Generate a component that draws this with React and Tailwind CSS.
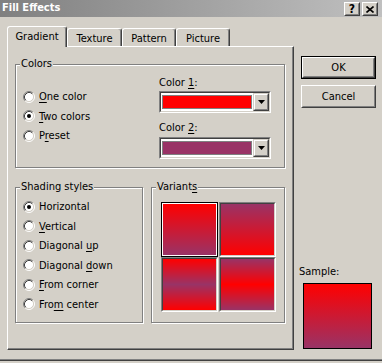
import React from "react";

// mnemonic underline
const U = ({ children }) => <span className="underline underline-offset-[2px]">{children}</span>;

function Radio({ checked }) {
  return (
    <svg width="12" height="12" viewBox="0 0 12 12" className="shrink-0">
      <circle cx="6" cy="6" r="4.5" fill="#fff" />
      <path d="M2.11 9.89 A5.5 5.5 0 0 1 9.89 2.11" fill="none" stroke="#808080" />
      <path d="M9.89 2.11 A5.5 5.5 0 0 1 2.11 9.89" fill="none" stroke="#fff" />
      <path d="M2.82 9.18 A4.5 4.5 0 0 1 9.18 2.82" fill="none" stroke="#404040" />
      <path d="M9.18 2.82 A4.5 4.5 0 0 1 2.82 9.18" fill="none" stroke="#d4d0c8" />
      {checked && <circle cx="6" cy="6" r="2" fill="#000" />}
    </svg>
  );
}

const RadioRow = ({ checked, children }) => (
  <div className="flex h-[19.5px] items-center gap-[4px]">
    <Radio checked={checked} />
    <span>{children}</span>
  </div>
);

function Group({ label, className, children }) {
  return (
    <div className={`relative border border-[#808080] shadow-[inset_1px_1px_0_#fff,1px_1px_0_#fff] ${className}`}>
      <span className="absolute left-[4px] top-[-8px] bg-[#d4d0c8] px-px">{label}</span>
      {children}
    </div>
  );
}

const Raised = ({ children, className = "" }) => (
  <div className={`flex border border-t-white border-l-white border-r-[#404040] border-b-[#404040] ${className}`}>
    <div className="flex flex-1 items-center justify-center border border-t-[#d4d0c8] border-l-[#d4d0c8] border-r-[#808080] border-b-[#808080]">
      {children}
    </div>
  </div>
);

function ColorDrop({ swatch }) {
  return (
    <div className="flex h-[22px] w-[112px] border border-t-[#808080] border-l-[#808080] border-b-white border-r-white">
      <div className="flex flex-1 border border-t-[#404040] border-l-[#404040] border-b-[#d4d0c8] border-r-[#d4d0c8] bg-white">
        <div className="flex-1 px-px py-[2px]">
          <div className={`h-full border border-[#808080] ${swatch}`} />
        </div>
        <div className="flex w-[16px] border border-t-[#d4d0c8] border-l-[#d4d0c8] border-r-[#404040] border-b-[#404040] bg-[#d4d0c8]">
          <div className="flex flex-1 items-center justify-center border border-t-white border-l-white border-r-[#808080] border-b-[#808080]">
            <svg width="7" height="4" viewBox="0 0 7 4">
              <path d="M0 0h7L3.5 4z" fill="#000" />
            </svg>
          </div>
        </div>
      </div>
    </div>
  );
}

function Tab({ selected, className, children }) {
  if (selected)
    return (
      <div className={`relative z-10 -mb-px flex h-[21px] justify-center rounded-t-[3px] border-t border-l border-r border-t-white border-l-white border-r-[#404040] bg-[#d4d0c8] pt-[3px] shadow-[inset_-1px_0_0_#808080] ${className}`}>
        {children}
      </div>
    );
  return (
    <div className={`flex h-[18px] justify-center rounded-t-[3px] border-t border-l border-r border-t-white border-l-white border-r-[#404040] pt-[3px] shadow-[inset_-1px_0_0_#808080] ${className}`}>
      {children}
    </div>
  );
}

function Cell({ bg, selected }) {
  if (selected)
    return (
      <div className="h-[55px] w-[57px] border border-black bg-white p-px">
        <div className={`h-full w-full ${bg}`} />
      </div>
    );
  return (
    <div className="h-[55px] w-[57px] border border-t-[#808080] border-l-[#808080] border-r-white border-b-white">
      <div className="h-full w-full border border-t-[#404040] border-l-[#404040] border-r-[#d4d0c8] border-b-[#d4d0c8]">
        <div className={`h-full w-full ${bg}`} />
      </div>
    </div>
  );
}

export default function App() {
  return (
    <div className="flex h-[363px] w-[382px] flex-col overflow-hidden bg-[#d4d0c8] font-['DejaVu_Sans_Condensed','Liberation_Sans',sans-serif] text-[11px] leading-[13px] text-black">
      {/* title bar */}
      <div className="flex h-[17px] items-start bg-[linear-gradient(to_right,#808080,#c0c0c0)]">
        <span className="pl-[2px] pt-[1px] font-bold text-white">Fill Effects</span>
        <div className="ml-auto flex gap-[2px] pr-[4px] pt-[2px]">
          <Raised className="h-[14px] w-[16px] bg-[#d4d0c8]">
            <span className="text-[12px] font-bold leading-[11px]">?</span>
          </Raised>
          <Raised className="h-[14px] w-[16px] bg-[#d4d0c8]">
            <svg width="8" height="7" viewBox="0 0 8 7">
              <path d="M0.5 0.5L7.5 6.5M7.5 0.5L0.5 6.5" stroke="#000" strokeWidth="1.6" />
            </svg>
          </Raised>
        </div>
      </div>

      <div className="flex flex-1 pl-[7px] pt-[9px]">
        {/* left: tabs + panel */}
        <div className="flex w-[287px] flex-col">
          <div className="flex h-[20px] items-end">
            <Tab selected className="w-[60px]">Gradient</Tab>
            <Tab className="w-[55px]">Texture</Tab>
            <Tab className="w-[54px]">Pattern</Tab>
            <Tab className="w-[54px]">Picture</Tab>
          </div>
          <div className="h-[304px] border border-t-white border-l-white border-r-[#404040] border-b-[#404040] pl-[7px] pt-[17px] shadow-[inset_-1px_-1px_0_#808080]">
            <Group label="Colors" className="h-[104px] w-[270px]">
              <div className="flex">
                <div className="ml-[7px] w-[128px] pt-[22px]">
                  <RadioRow><U>O</U>ne color</RadioRow>
                  <RadioRow checked><U>T</U>wo colors</RadioRow>
                  <RadioRow>P<U>r</U>eset</RadioRow>
                </div>
                <div className="ml-[8px] pt-[11px]">
                  <div>Color <U>1</U>:</div>
                  <div className="mt-[2px]">
                    <ColorDrop swatch="bg-[#ff0000]" />
                  </div>
                  <div className="mt-[8px]">Color <U>2</U>:</div>
                  <div className="mt-[3px]">
                    <ColorDrop swatch="bg-[#993366]" />
                  </div>
                </div>
              </div>
            </Group>

            <div className="mt-[19px] flex gap-[8px]">
              <Group label="Shading styles" className="h-[136px] w-[128px]">
                <div className="ml-[7px] pt-[9px]">
                  <RadioRow checked>Horizontal</RadioRow>
                  <RadioRow><U>V</U>ertical</RadioRow>
                  <RadioRow>Diagonal <U>u</U>p</RadioRow>
                  <RadioRow>Diagonal <U>d</U>own</RadioRow>
                  <RadioRow><U>F</U>rom corner</RadioRow>
                  <RadioRow>Fro<U>m</U> center</RadioRow>
                </div>
              </Group>
              <Group label={<>Variant<U>s</U></>} className="h-[136px] w-[134px]">
                <div className="grid grid-cols-[57px_57px] gap-x-px pl-[9px] pt-[14px]">
                  <Cell selected bg="bg-[linear-gradient(#ff0000,#993366)]" />
                  <Cell bg="bg-[linear-gradient(#993366,#ff0000)]" />
                  <Cell bg="bg-[linear-gradient(#ff0000,#993366,#ff0000)]" />
                  <Cell bg="bg-[linear-gradient(#993366,#ff0000,#993366)]" />
                </div>
              </Group>
            </div>
          </div>
        </div>

        {/* right: buttons + sample */}
        <div className="ml-[7px] flex w-[75px] flex-col pb-[10px] pt-[30px]">
          <div className="flex h-[23px] border border-black">
            <Raised className="flex-1">OK</Raised>
          </div>
          <Raised className="mt-[6px] h-[23px]">Cancel</Raised>
          <div className="-ml-[2px] mt-auto mb-[5px]">Sample:</div>
          <div className="ml-[2px] h-[66px] w-[69px] border border-black bg-[linear-gradient(#ff0000,#993366)]" />
        </div>
      </div>

      <div className="h-px bg-[#808080]" />
      <div className="h-px bg-[#404040]" />
      <div className="h-[2px] bg-[#d4d0c8]" />
    </div>
  );
}
